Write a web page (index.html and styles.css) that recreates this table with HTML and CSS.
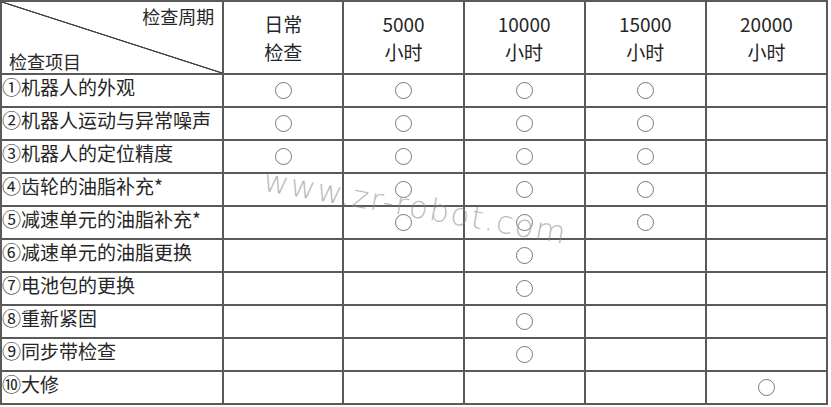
FILE: index.html
```html
<!DOCTYPE html>
<html lang="zh-CN">
<head>
<meta charset="utf-8">
<title>检查周期</title>
<link rel="stylesheet" href="styles.css">
</head>
<body>
<div class="wrap">
<table class="plan">
  <colgroup>
    <col class="c-item"><col class="c-p"><col class="c-p"><col class="c-p2"><col class="c-p2"><col class="c-p2">
  </colgroup>
  <thead>
    <tr>
      <th class="corner">
        <div class="corner-in">
          <span class="period">检查周期</span>
          <span class="item">检查项目</span>
        </div>
      </th>
      <th class="hd">日常<br>检查</th>
      <th class="hd">5000<br>小时</th>
      <th class="hd">10000<br>小时</th>
      <th class="hd">15000<br>小时</th>
      <th class="hd">20000<br>小时</th>
    </tr>
  </thead>
  <tbody>
    <tr><td class="lbl">①机器人的外观</td><td class="mk"><span class="o"></span></td><td class="mk"><span class="o"></span></td><td class="mk"><span class="o"></span></td><td class="mk"><span class="o"></span></td><td></td></tr>
    <tr><td class="lbl">②机器人运动与异常噪声</td><td class="mk"><span class="o"></span></td><td class="mk"><span class="o"></span></td><td class="mk"><span class="o"></span></td><td class="mk"><span class="o"></span></td><td></td></tr>
    <tr><td class="lbl">③机器人的定位精度</td><td class="mk"><span class="o"></span></td><td class="mk"><span class="o"></span></td><td class="mk"><span class="o"></span></td><td class="mk"><span class="o"></span></td><td></td></tr>
    <tr><td class="lbl">④齿轮的油脂补充*</td><td></td><td class="mk"><span class="o"></span></td><td class="mk"><span class="o"></span></td><td class="mk"><span class="o"></span></td><td></td></tr>
    <tr><td class="lbl">⑤减速单元的油脂补充*</td><td></td><td class="mk"><span class="o"></span></td><td class="mk"><span class="o"></span></td><td class="mk"><span class="o"></span></td><td></td></tr>
    <tr><td class="lbl">⑥减速单元的油脂更换</td><td></td><td></td><td class="mk"><span class="o"></span></td><td></td><td></td></tr>
    <tr><td class="lbl">⑦电池包的更换</td><td></td><td></td><td class="mk"><span class="o"></span></td><td></td><td></td></tr>
    <tr><td class="lbl">⑧重新紧固</td><td></td><td></td><td class="mk"><span class="o"></span></td><td></td><td></td></tr>
    <tr><td class="lbl">⑨同步带检查</td><td></td><td></td><td class="mk"><span class="o"></span></td><td></td><td></td></tr>
    <tr><td class="lbl">⑩大修</td><td></td><td></td><td></td><td></td><td class="mk"><span class="o"></span></td></tr>
  </tbody>
</table>
<div class="watermark">www.zr-robot.com</div>
</div>
</body>
</html>
```

FILE: styles.css
```css
html, body {
  margin: 0;
  padding: 0;
  background: #ffffff;
}

body {
  font-family: "Noto Sans CJK SC", "Noto Sans", sans-serif;
  color: #262626;
}

.wrap {
  position: relative;
  width: 831px;
  height: 407px;
  overflow: hidden;
}

.plan {
  border-collapse: collapse;
  table-layout: fixed;
  width: 828px;
}

.plan th,
.plan td {
  border: 2px solid #5a5a5a;
  padding: 0;
}

.c-item { width: 222px; }
.c-p { width: 120px; }
.c-p2 { width: 121px; }

.plan thead tr { height: 71px; }
.plan tbody tr { height: 33px; }

.corner {
  background: linear-gradient(to top right, transparent calc(50% - 1px), #444444 calc(50% - 0.4px), #444444 calc(50% + 0.4px), transparent calc(50% + 1px));
  font-weight: 400;
}

.corner-in {
  height: 71px;
  display: flex;
  flex-direction: column;
  justify-content: space-between;
  font-size: 18px;
  line-height: 22px;
}

.period {
  align-self: flex-end;
  padding: 3px 8px 0 0;
}

.item {
  align-self: flex-start;
  padding: 0 0 1px 7px;
}

.hd {
  font-weight: 400;
  font-size: 19px;
  line-height: 27.5px;
  text-align: center;
  vertical-align: middle;
  padding-top: 1px;
}

.lbl {
  font-size: 19px;
  font-weight: 400;
  line-height: 24px;
  vertical-align: top;
  padding: 2px 0 0 3px;
  white-space: nowrap;
}

.mk {
  vertical-align: middle;
  padding-right: 9px;
}

.o {
  display: block;
  margin: 0 auto;
  width: 15px;
  height: 15px;
  border: 1.3px solid #777777;
  border-radius: 50%;
}

.watermark {
  position: absolute;
  left: 267px;
  top: 162px;
  font-family: "DejaVu Sans", "Open Sans", sans-serif;
  font-weight: 200;
  font-size: 31px;
  letter-spacing: 1.8px;
  color: rgba(140, 140, 140, 0.6);
  transform: rotate(10deg);
  transform-origin: left top;
  white-space: nowrap;
  pointer-events: none;
}
```
